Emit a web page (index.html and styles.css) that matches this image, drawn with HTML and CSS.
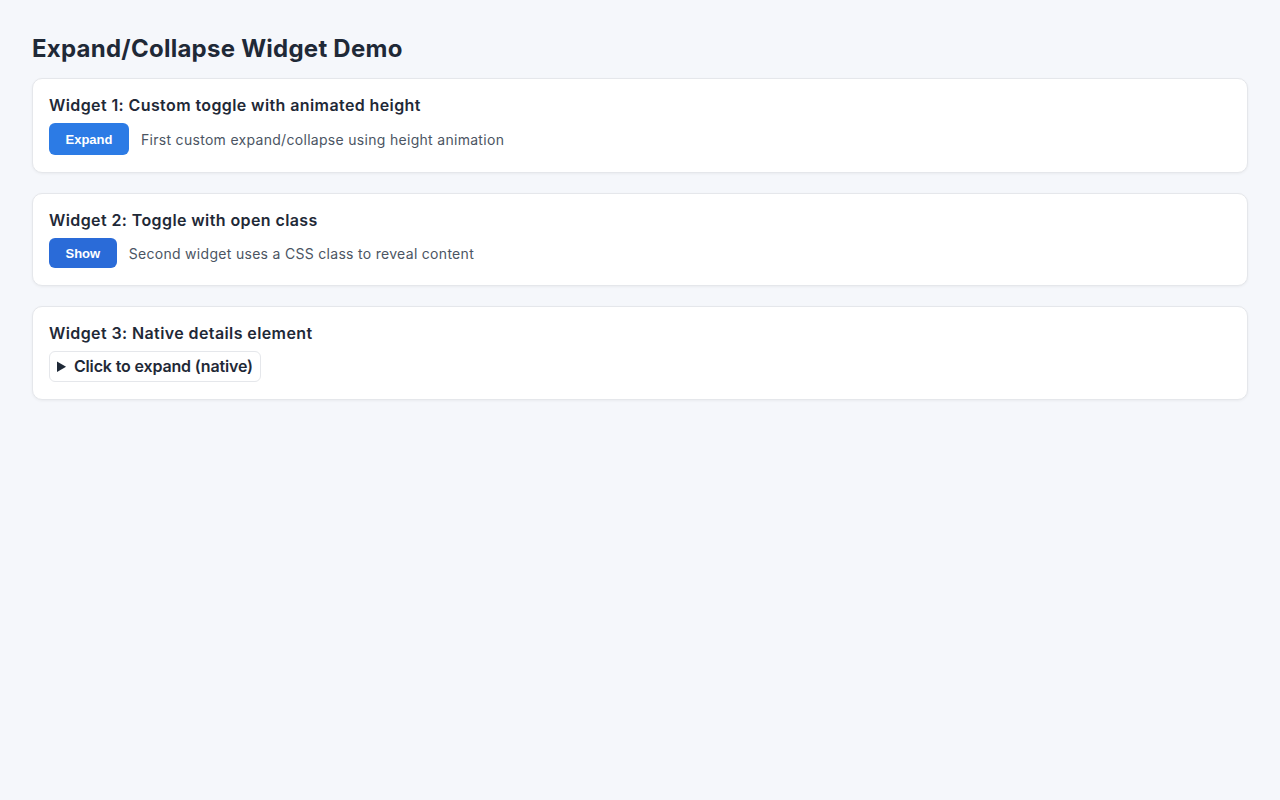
FILE: index.html
```html
<!DOCTYPE html>
<html lang="en">
<head>
  <meta charset="UTF-8" />
  <title>Expand/Collapse Widget Demo</title>
  <meta name="viewport" content="width=device-width, initial-scale=1.0" />
  <link rel="stylesheet" href="styles.css">
</head>
<body>
  <h1>Expand/Collapse Widget Demo</h1>

  <div class="card">
    <h3>Widget 1: Custom toggle with animated height</h3>
    <div class="row">
      <button class="btn btn-expand" id="toggle1">Expand</button>
      <span class="desc">First custom expand/collapse using height animation</span>
    </div>
    <div class="panel" id="panel1">
      <p>This content slides open with a height transition.</p>
    </div>
  </div>

  <div class="card">
    <h3>Widget 2: Toggle with open class</h3>
    <div class="row">
      <button class="btn btn-show" id="toggle2">Show</button>
      <span class="desc">Second widget uses a CSS class to reveal content</span>
    </div>
    <div class="reveal" id="panel2">
      <p>Revealed by toggling the open class.</p>
    </div>
  </div>

  <div class="card">
    <h3>Widget 3: Native details element</h3>
    <details>
      <summary>Click to expand (native)</summary>
      <p>Native details content.</p>
    </details>
  </div>

  <script>
    const t1 = document.getElementById('toggle1');
    const p1 = document.getElementById('panel1');
    t1.addEventListener('click', () => {
      const open = p1.classList.toggle('open');
      p1.style.height = open ? p1.scrollHeight + 'px' : '0px';
      t1.innerText = open ? 'Collapse' : 'Expand';
    });

    const t2 = document.getElementById('toggle2');
    const p2 = document.getElementById('panel2');
    t2.addEventListener('click', () => {
      p2.classList.toggle('open');
      t2.innerText = p2.classList.contains('open') ? 'Hide' : 'Show';
    });
  </script>
</body>
</html>
```

FILE: styles.css
```css
* { margin: 0; padding: 0; box-sizing: border-box; }
body {
  font-family: Inter, "Noto Sans", sans-serif;
  background: #f5f7fb;
  color: #1f2937;
  padding: 33px 32px;
}
h1 {
  font-size: 24px;
  font-weight: 700;
  line-height: 32px;
  margin-bottom: 13px;
  letter-spacing: 0.25px;
}
.card {
  background: #ffffff;
  border: 1px solid #e5e7eb;
  border-radius: 10px;
  box-shadow: 0 1px 3px rgba(0, 0, 0, 0.05);
  padding: 16px 16px 17px;
  margin-bottom: 20px;
}
.card h3 {
  font-size: 16px;
  font-weight: 600;
  line-height: 20px;
  margin-bottom: 8px;
  letter-spacing: 0.4px;
}
.row {
  display: flex;
  align-items: center;
  gap: 12px;
}
.btn {
  font-family: "Liberation Sans", Arial, sans-serif;
  font-size: 13px;
  font-weight: 700;
  color: #ffffff;
  border: none;
  border-radius: 6px;
  padding: 0 16.5px;
  cursor: pointer;
}
.btn-expand {
  background: #2c7be5;
  height: 32px;
}
.btn-show {
  background: #2a6bd8;
  height: 30px;
}
.desc {
  font-size: 14px;
  color: #4b5563;
  letter-spacing: 0.3px;
}
.panel {
  height: 0;
  overflow: hidden;
  visibility: hidden;
  transition: height 0.3s ease;
}
.panel.open { visibility: visible; }
.panel p, .reveal p, details p {
  padding-top: 10px;
  font-size: 14px;
  color: #4b5563;
}
.reveal { display: none; }
.reveal.open { display: block; }
details {
  display: inline-block;
  border: 1px solid #e5e7eb;
  border-radius: 6px;
  padding: 4px 7px;
}
summary {
  font-size: 16px;
  font-weight: 600;
  line-height: 21px;
  letter-spacing: -0.15px;
  cursor: pointer;
}
```
